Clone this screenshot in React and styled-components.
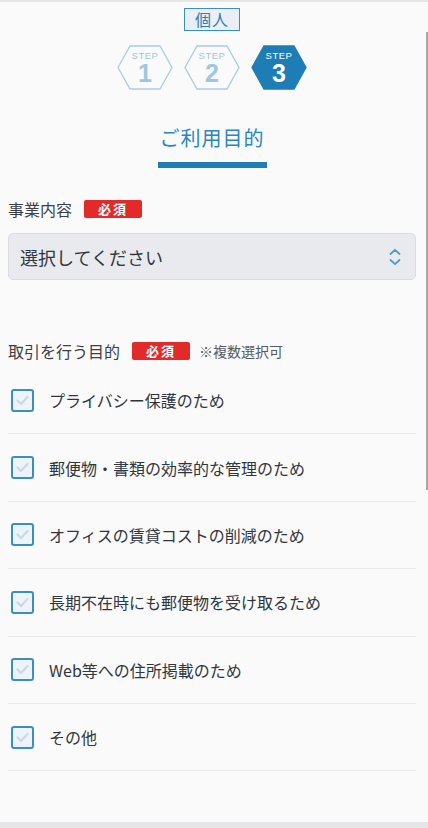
import React from 'react';
import styled, { createGlobalStyle } from 'styled-components';

const GlobalStyle = createGlobalStyle`
  html, body {
    margin: 0;
    padding: 0;
    background: #e6e6e8;
  }
  body {
    font-family: "Noto Sans CJK JP", "Noto Sans", sans-serif;
    color: #333a44;
  }
`;

const Page = styled.div`
  position: relative;
  width: 428px;
  height: 828px;
  overflow: hidden;
  background: #e6e6e8;
  display: flex;
  flex-direction: column;
`;

const Sheet = styled.div`
  margin-top: 2px;
  height: 820px;
  background: #fafafa;
  padding: 6px 12px 0 8px;
  box-sizing: border-box;
  display: flex;
  flex-direction: column;
`;

const Scrollbar = styled.div`
  position: absolute;
  right: 0;
  top: 32px;
  width: 2px;
  height: 458px;
  background: #a6a6a8;
`;

const Header = styled.div`
  display: flex;
  flex-direction: column;
  align-items: center;
`;

const Kind = styled.div`
  width: 56px;
  height: 23px;
  box-sizing: border-box;
  border: 1px solid #3b8fc3;
  background: #e9eff4;
  color: #2d7fb3;
  font-size: 16px;
  line-height: 21px;
  text-align: center;
  letter-spacing: 1px;
`;

const Steps = styled.div`
  display: flex;
  gap: 11px;
  margin-top: 14px;
`;

const StepBox = styled.div`
  position: relative;
  width: 56px;
  height: 45px;
  display: flex;
  flex-direction: column;
  align-items: center;
  justify-content: center;
  color: ${p => (p.$active ? '#ffffff' : '#9ec7e1')};
  svg {
    position: absolute;
    inset: 0;
  }
`;

const StepLabel = styled.span`
  position: relative;
  font-family: "Liberation Sans", Arial, sans-serif;
  font-size: 9.5px;
  letter-spacing: 0.5px;
  line-height: 11px;
  margin-top: 2px;
`;

const StepNum = styled.span`
  position: relative;
  font-family: "Liberation Sans", Arial, sans-serif;
  font-weight: bold;
  font-size: 25px;
  line-height: 28px;
  margin-top: -2px;
`;

const Title = styled.h1`
  margin: 34px 0 0;
  font-weight: normal;
  font-size: 20px;
  line-height: 28px;
  color: #2a86c0;
  letter-spacing: 1px;
  padding: 0 2px 10px;
  border-bottom: 6px solid #1f7db5;
`;

const Label = styled.div`
  display: flex;
  align-items: center;
  font-size: 16px;
  line-height: 20px;
  color: #3a4049;
  margin-top: ${p => p.$mt}px;
`;

const Badge = styled.span`
  display: inline-block;
  margin-left: 12px;
  width: 58px;
  height: 18px;
  line-height: 18px;
  text-align: center;
  background: #e32a2a;
  color: #fff;
  font-size: 13px;
  font-weight: bold;
  border-radius: 2px;
  letter-spacing: 2px;
`;

const Note = styled.span`
  margin-left: 9px;
  font-size: 14px;
  color: #555b63;
`;

const Select = styled.div`
  margin-top: 14px;
  height: 47px;
  box-sizing: border-box;
  border: 1px solid #dadce0;
  border-radius: 5px;
  background: #e9eaee;
  display: flex;
  align-items: center;
  justify-content: space-between;
  padding: 0 14px 0 11px;
  font-size: 18px;
  color: #2f3640;
`;

const List = styled.div`
  margin-top: 6px;
  display: flex;
  flex-direction: column;
`;

const Row = styled.label`
  height: 67.4px;
  box-sizing: border-box;
  border-bottom: 1px solid #e6e8ea;
  display: flex;
  align-items: center;
  gap: 15px;
  padding-left: 3px;
  font-size: 16px;
  color: #2f3640;
`;

const Box = styled.span`
  width: 23px;
  height: 23px;
  box-sizing: border-box;
  border: 2px solid #3a8ec4;
  border-radius: 3px;
  background: #eef3f7;
  display: flex;
  align-items: center;
  justify-content: center;
`;

function Hex({ active }) {
  return (
    <svg width="56" height="45" viewBox="0 0 56 45">
      <polygon
        points="1,22.5 13,1 43,1 55,22.5 43,44 13,44"
        fill={active ? '#1e7db5' : 'none'}
        stroke={active ? '#1e7db5' : '#a8cde4'}
        strokeWidth="1.3"
      />
    </svg>
  );
}

function Step({ n, active }) {
  return (
    <StepBox $active={active}>
      <Hex active={active} />
      <StepLabel>STEP</StepLabel>
      <StepNum>{n}</StepNum>
    </StepBox>
  );
}

const purposes = [
  'プライバシー保護のため',
  '郵便物・書類の効率的な管理のため',
  'オフィスの賃貸コストの削減のため',
  '長期不在時にも郵便物を受け取るため',
  'Web等への住所掲載のため',
  'その他',
];

export default function App() {
  return (
    <Page>
      <GlobalStyle />
      <Sheet>
        <Header>
          <Kind>個人</Kind>
          <Steps>
            <Step n="1" />
            <Step n="2" />
            <Step n="3" active />
          </Steps>
          <Title>ご利用目的</Title>
        </Header>

        <Label $mt={31}>
          事業内容<Badge>必須</Badge>
        </Label>
        <Select>
          <span>選択してください</span>
          <svg width="12" height="18" viewBox="0 0 12 18">
            <path d="M1.5 6 L6 1.8 L10.5 6 M1.5 12 L6 16.2 L10.5 12" fill="none" stroke="#4a9bd0" strokeWidth="1.8" strokeLinecap="round" strokeLinejoin="round" />
          </svg>
        </Select>

        <Label $mt={61}>
          取引を行う目的<Badge>必須</Badge><Note>※複数選択可</Note>
        </Label>
        <List>
          {purposes.map(p => (
            <Row key={p}>
              <Box>
                <svg width="13" height="11" viewBox="0 0 13 11">
                  <path d="M1.5 5.5 L5 9 L11.5 2" fill="none" stroke="#c6dae8" strokeWidth="2.2" strokeLinecap="round" strokeLinejoin="round" />
                </svg>
              </Box>
              {p}
            </Row>
          ))}
        </List>
      </Sheet>
      <Scrollbar />
    </Page>
  );
}
